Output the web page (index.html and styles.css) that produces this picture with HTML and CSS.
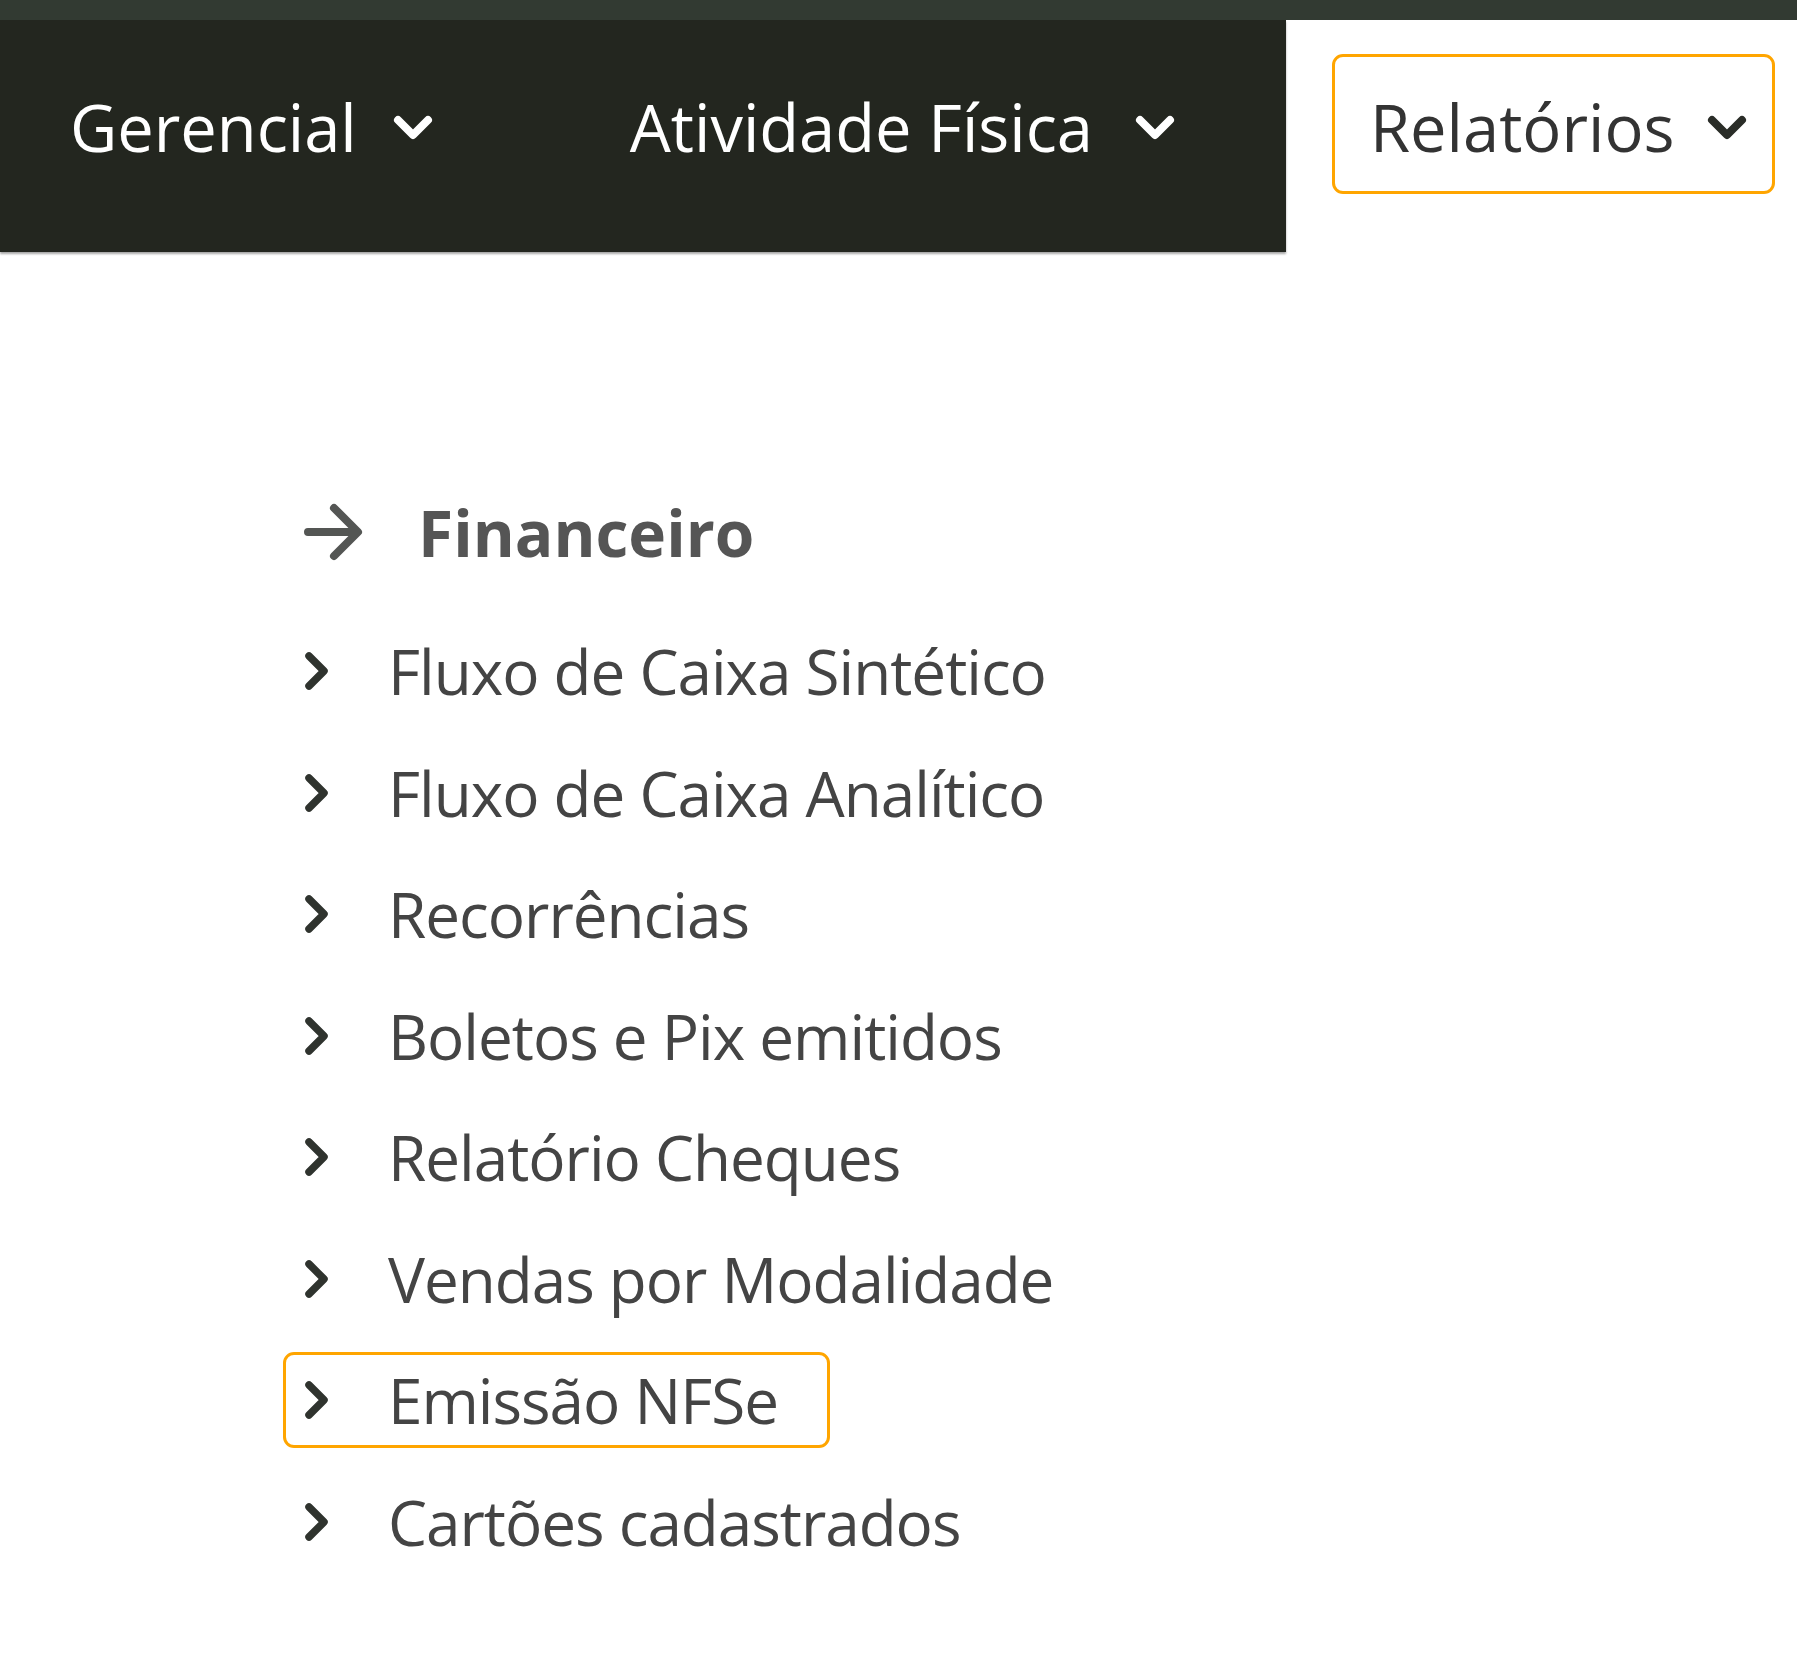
FILE: index.html
```html
<!DOCTYPE html>
<html lang="pt-BR">
<head>
<meta charset="utf-8">
<title>Relatórios</title>
<link rel="stylesheet" href="styles.css">
</head>
<body>
<div class="topstrip"></div>
<header class="navbar">
  <nav class="nav-dark">
    <div class="nav-item nav-item-first">
      <span>Gerencial</span>
      <svg class="caret" viewBox="0 0 42 30"><path d="M6 7 L21 22 L36 7"/></svg>
    </div>
    <div class="nav-item nav-item-second">
      <span>Atividade Física</span>
      <svg class="caret" viewBox="0 0 42 30"><path d="M6 7 L21 22 L36 7"/></svg>
    </div>
  </nav>
  <div class="nav-light">
    <div class="nav-item nav-active">
      <span>Relatórios</span>
      <svg class="caret" viewBox="0 0 42 30"><path d="M6 7 L21 22 L36 7"/></svg>
    </div>
  </div>
</header>

<main class="menu">
  <div class="menu-title">
    <svg class="arrow" viewBox="0 0 60 58"><path d="M5 29 H53 M31 5 L55 29 L31 53"/></svg>
    <span>Financeiro</span>
  </div>
  <ul class="menu-list">
    <li><svg class="chev" viewBox="0 0 30 40"><path d="M6 5 L21 20 L6 35"/></svg><span>Fluxo de Caixa Sintético</span></li>
    <li><svg class="chev" viewBox="0 0 30 40"><path d="M6 5 L21 20 L6 35"/></svg><span>Fluxo de Caixa Analítico</span></li>
    <li><svg class="chev" viewBox="0 0 30 40"><path d="M6 5 L21 20 L6 35"/></svg><span>Recorrências</span></li>
    <li><svg class="chev" viewBox="0 0 30 40"><path d="M6 5 L21 20 L6 35"/></svg><span>Boletos e Pix emitidos</span></li>
    <li><svg class="chev" viewBox="0 0 30 40"><path d="M6 5 L21 20 L6 35"/></svg><span>Relatório Cheques</span></li>
    <li><svg class="chev" viewBox="0 0 30 40"><path d="M6 5 L21 20 L6 35"/></svg><span>Vendas por Modalidade</span></li>
    <li class="active"><svg class="chev" viewBox="0 0 30 40"><path d="M6 5 L21 20 L6 35"/></svg><span>Emissão NFSe</span></li>
    <li><svg class="chev" viewBox="0 0 30 40"><path d="M6 5 L21 20 L6 35"/></svg><span>Cartões cadastrados</span></li>
  </ul>
</main>
</body>
</html>
```

FILE: styles.css
```css
* { box-sizing: border-box; }

html, body {
  margin: 0;
  padding: 0;
  background: #ffffff;
  font-family: "Open Sans", "Noto Sans", "DejaVu Sans", sans-serif;
}

.topstrip {
  height: 20px;
  background: #323a32;
}

.navbar {
  display: flex;
  height: 232px;
}

.nav-dark {
  width: 1286px;
  background: #23261f;
  display: flex;
  align-items: flex-start;
  padding-top: 34px;
  padding-left: 70px;
  box-shadow: 0 2px 2px rgba(0, 0, 0, 0.35);
}

.nav-light {
  flex: 1;
  display: flex;
  align-items: flex-start;
  padding-top: 34px;
  padding-left: 46px;
}

.nav-item {
  display: flex;
  align-items: center;
  font-size: 65px;
  color: #ffffff;
  height: 140px;
  padding-top: 6px;
  white-space: nowrap;
}

.nav-item .caret {
  width: 42px;
  height: 30px;
  flex: none;
  fill: none;
  stroke: #ffffff;
  stroke-width: 8;
  stroke-linecap: round;
  stroke-linejoin: round;
  margin-top: 2px;
}

.nav-item-first .caret { margin-left: 35px; }
.nav-item-second { margin-left: 196px; }
.nav-item-second .caret { margin-left: 41px; }

.nav-active {
  width: 443px;
  border: 3px solid #ffa500;
  border-radius: 11px;
  padding-left: 35px;
  color: #333333;
}

.nav-active .caret {
  stroke: #2a2d28;
  margin-left: 32px;
}

.menu {
  padding-left: 283px;
  padding-top: 250px;
}

.menu-title {
  display: flex;
  align-items: center;
  padding-left: 20px;
  font-size: 64px;
  font-weight: 700;
  color: #555555;
  height: 60px;
}

.menu-title .arrow {
  width: 60px;
  height: 58px;
  flex: none;
  fill: none;
  stroke: #545654;
  stroke-width: 8;
  stroke-linecap: round;
  stroke-linejoin: round;
  margin-right: 55px;
}

.menu-list {
  list-style: none;
  margin: 61px 0 0 0;
  padding: 0;
  display: flex;
  flex-direction: column;
  gap: 25.5px;
}

.menu-list li {
  width: 547px;
  height: 96px;
  display: flex;
  align-items: center;
  padding-left: 17px;
  border: 3px solid transparent;
  border-radius: 11px;
  font-size: 62px;
  letter-spacing: -1px;
  color: #444444;
  white-space: nowrap;
}

.menu-list li.active {
  border-color: #ffa500;
}

.menu-list .chev {
  width: 30px;
  height: 40px;
  flex: none;
  fill: none;
  stroke: #2f332e;
  stroke-width: 7.5;
  stroke-linecap: round;
  stroke-linejoin: round;
  margin-right: 55px;
}
```
